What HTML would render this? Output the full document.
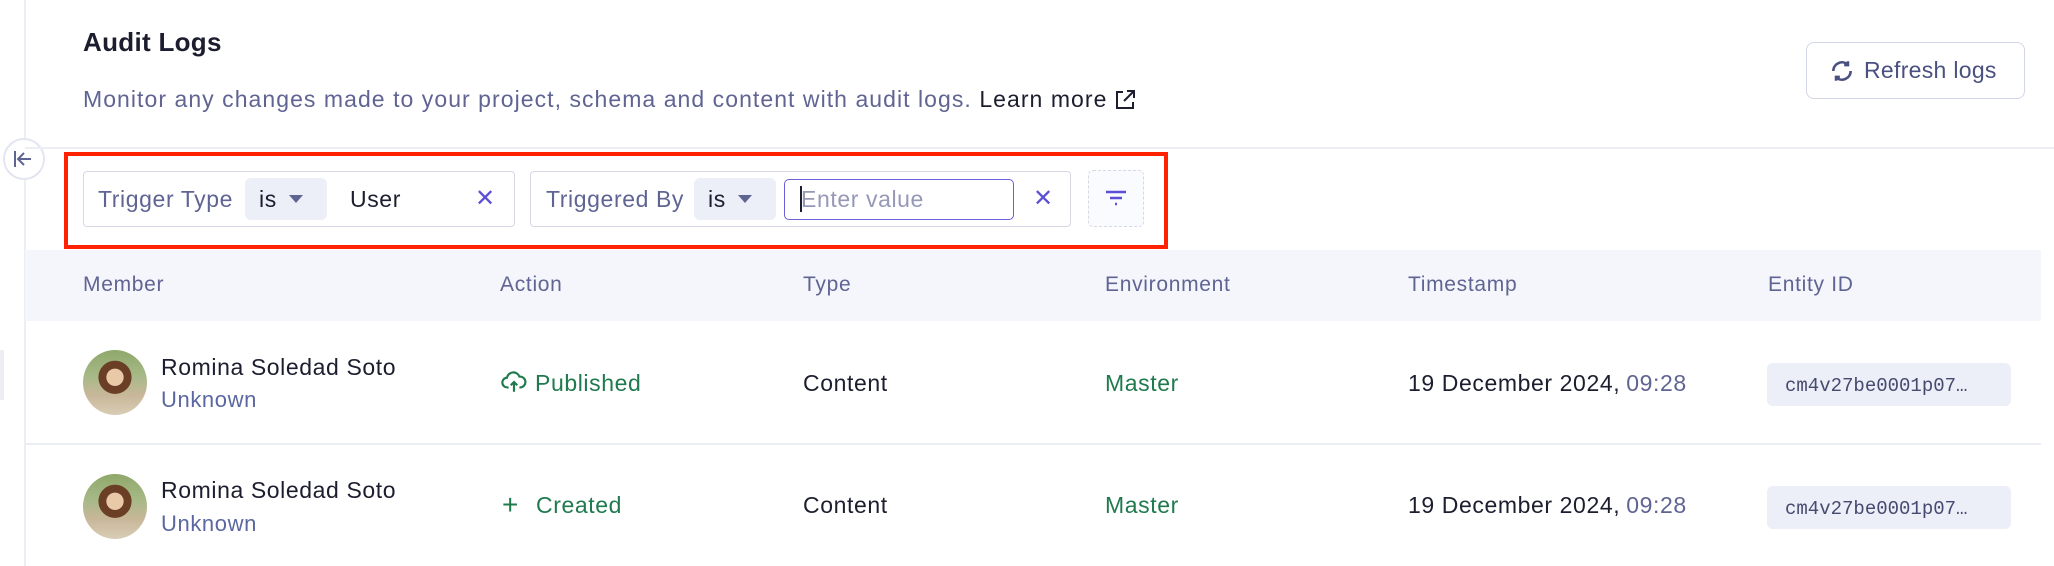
<!DOCTYPE html>
<html><head><meta charset="utf-8"><style>
*{box-sizing:border-box;margin:0;padding:0}
body{width:2054px;height:566px;background:#fff;font-family:"Liberation Sans",sans-serif;position:relative;overflow:hidden;color:#1c1d2e}
.a{position:absolute;white-space:nowrap}
.muted{color:#5f6493}
.green{color:#1f7a4d}
.hdr{font-size:21px;color:#5f6493;top:273px;letter-spacing:0.7px}
.t{font-size:23px;letter-spacing:0.6px}
.pill{position:absolute;background:#eceef8;border-radius:6px}
.av{position:absolute;width:64px;height:65px;border-radius:50%;background:radial-gradient(circle at 50% 42%,#e9c9a8 0 17%,#6b3e26 18% 33%,transparent 34%),linear-gradient(180deg,#8fa86a 0%,#a7b987 40%,#c9b79a 70%,#d8cdb5 100%);overflow:hidden}
.eid{position:absolute;width:244px;height:43px;background:#eceef8;border-radius:6px;font-family:"Liberation Mono",monospace;font-size:19px;color:#454a6e;padding:12px 0 0 18px}
</style></head><body>
<div class="a" style="left:24px;top:0;width:2px;height:566px;background:#eceef4"></div>
<div class="a" style="left:0;top:350px;width:4px;height:50px;background:#eceef4"></div>
<div class="a" style="left:3px;top:138px;width:42px;height:42px;border:2px solid #e3e5f0;border-radius:50%;background:#fff"></div>
<svg class="a" style="left:12px;top:149px" width="22" height="20" viewBox="0 0 22 20"><path d="M3 2v16M19 10H7M12 4l-6 6 6 6" stroke="#5f6493" stroke-width="2" fill="none"/></svg>

<div class="a" style="left:83px;top:27px;font-size:26px;font-weight:bold;color:#1c1d2e;letter-spacing:0.3px">Audit Logs</div>
<div class="a muted" style="left:83px;top:86px;font-size:23px;letter-spacing:1.05px">Monitor any changes made to your project, schema and content with audit logs. <span style="color:#1c1d2e">Learn more</span></div>
<svg class="a" style="left:1113px;top:88px" width="24" height="24" viewBox="0 0 24 24"><path d="M10 4H4v16h16v-6M14 3h7v7M21 3L11 13" stroke="#1c1d2e" stroke-width="2" fill="none"/></svg>

<div class="a" style="left:1806px;top:42px;width:219px;height:57px;border:1.5px solid #d3d6e6;border-radius:8px"></div>
<svg class="a" style="left:1829px;top:58px" width="26" height="26" viewBox="0 0 24 24"><path d="M4 12a8 8 0 0 1 13.5-5.8M20 12a8 8 0 0 1-13.5 5.8M17.5 3v3.5H14M6.5 21v-3.5H10" stroke="#4a5080" stroke-width="2.4" fill="none"/></svg>
<div class="a" style="left:1864px;top:57px;font-size:23px;color:#4a5080;letter-spacing:0.3px">Refresh logs</div>

<div class="a" style="left:25px;top:147px;width:2029px;height:2px;background:#eceef4"></div>

<div class="a" style="left:64px;top:152px;width:1104px;height:97px;border:4px solid #ff2200"></div>

<div class="a" style="left:83px;top:171px;width:432px;height:56px;border:1.5px solid #d6d8e6;border-radius:4px"></div>
<div class="a muted t" style="left:98px;top:186px">Trigger Type</div>
<div class="pill" style="left:245px;top:178px;width:82px;height:42px"></div>
<div class="a t" style="left:259px;top:186px">is</div>
<svg class="a" style="left:289px;top:195px" width="14" height="8"><path d="M0 0h14L7 8z" fill="#5f6493"/></svg>
<div class="a t" style="left:350px;top:186px">User</div>
<div class="a" style="left:475px;top:184px;font-size:24px;color:#5b4fd6">✕</div>

<div class="a" style="left:530px;top:171px;width:541px;height:56px;border:1.5px solid #d6d8e6;border-radius:4px"></div>
<div class="a muted t" style="left:546px;top:186px">Triggered By</div>
<div class="pill" style="left:694px;top:178px;width:82px;height:42px"></div>
<div class="a t" style="left:708px;top:186px">is</div>
<svg class="a" style="left:738px;top:195px" width="14" height="8"><path d="M0 0h14L7 8z" fill="#5f6493"/></svg>
<div class="a" style="left:784px;top:179px;width:230px;height:41px;border:1.5px solid #6a5fd9;border-radius:5px"></div>
<div class="a" style="left:800px;top:186px;width:2px;height:26px;background:#1c1d2e"></div>
<div class="a t" style="left:801px;top:186px;color:#9599b6">Enter value</div>
<div class="a" style="left:1033px;top:184px;font-size:24px;color:#5b4fd6">✕</div>

<div class="a" style="left:1088px;top:170px;width:56px;height:57px;border:1.5px dashed #d6d8e6;border-radius:5px;background:#fafbfe"></div>
<svg class="a" style="left:1104px;top:189px" width="24" height="18"><path d="M2 3h20M6 9h12M11 15h2" stroke="#5b4fd6" stroke-width="2.4"/></svg>

<div class="a" style="left:25px;top:250px;width:2016px;height:71px;background:#f5f6fb"></div>
<div class="a hdr" style="left:83px">Member</div>
<div class="a hdr" style="left:500px">Action</div>
<div class="a hdr" style="left:803px">Type</div>
<div class="a hdr" style="left:1105px">Environment</div>
<div class="a hdr" style="left:1408px">Timestamp</div>
<div class="a hdr" style="left:1768px">Entity ID</div>

<div class="av" style="left:83px;top:350px"></div>
<div class="a t" style="left:161px;top:354px">Romina Soledad Soto</div>
<div class="a t" style="left:161px;top:387px;font-size:22px;color:#5a67a0">Unknown</div>
<svg class="a" style="left:501px;top:369px" width="26" height="26" viewBox="0 0 24 24"><path d="M7 17H6a4.5 4.5 0 0 1-.5-9A6 6 0 0 1 17 7a4.5 4.5 0 0 1 1 10h-1M12 21v-9M9 15l3-3 3 3" stroke="#1f7a4d" stroke-width="2" fill="none"/></svg>
<div class="a green t" style="left:535px;top:370px">Published</div>
<div class="a t" style="left:803px;top:370px">Content</div>
<div class="a green t" style="left:1105px;top:370px">Master</div>
<div class="a t" style="left:1408px;top:370px">19 December 2024,<span class="muted" style="margin-left:6px">09:28</span></div>
<div class="eid" style="left:1767px;top:363px">cm4v27be0001p07…</div>

<div class="a" style="left:25px;top:443px;width:2016px;height:2px;background:#eceef6"></div>

<div class="av" style="left:83px;top:474px"></div>
<div class="a t" style="left:161px;top:477px">Romina Soledad Soto</div>
<div class="a t" style="left:161px;top:511px;font-size:22px;color:#5a67a0">Unknown</div>
<div class="a green" style="left:502px;top:489px;font-size:28px">+</div>
<div class="a green t" style="left:536px;top:492px">Created</div>
<div class="a t" style="left:803px;top:492px">Content</div>
<div class="a green t" style="left:1105px;top:492px">Master</div>
<div class="a t" style="left:1408px;top:492px">19 December 2024,<span class="muted" style="margin-left:6px">09:28</span></div>
<div class="eid" style="left:1767px;top:486px">cm4v27be0001p07…</div>
</body></html>
